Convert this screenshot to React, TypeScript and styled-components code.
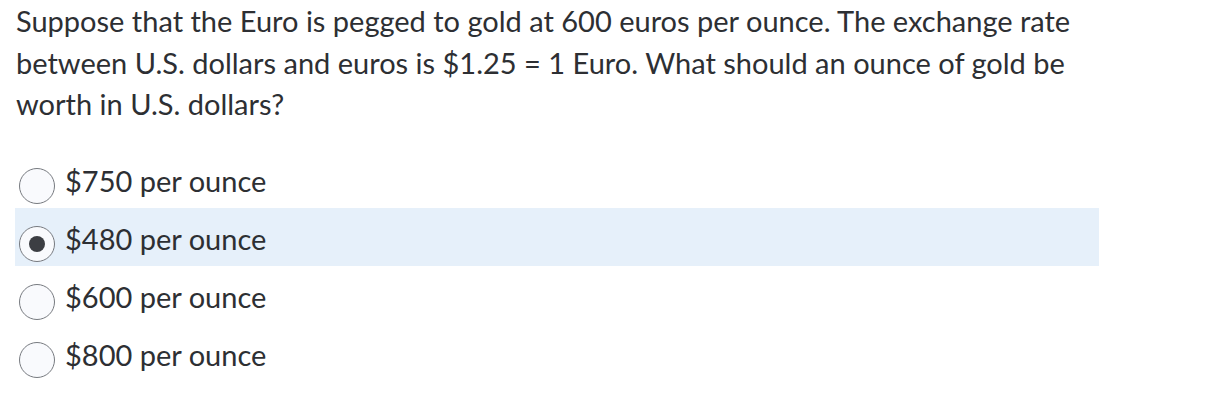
import styled, { createGlobalStyle } from 'styled-components';

const GlobalStyle = createGlobalStyle`
	body {
		margin: 0;
		background: #ffffff;
		font-family: Lato, "Open Sans", sans-serif;
		color: #2d2f33;
	}
`;

const answers = ['$750 per ounce', '$480 per ounce', '$600 per ounce', '$800 per ounce'];
const selected = 1;

function App() {
	return (
		<>
			<GlobalStyle />
			<QuestionContainer>
				<QuestionText>
					Suppose that the Euro is pegged to gold at 600 euros per ounce. The exchange rate between U.S. dollars and euros is $1.25 = 1 Euro. What should an ounce of gold be worth in U.S. dollars?
				</QuestionText>
				<AnswerList>
					{answers.map((answer, i) => (
						<AnswerRow key={answer} $active={i === selected}>
							<Radio $checked={i === selected} />
							<AnswerLabel>{answer}</AnswerLabel>
						</AnswerRow>
					))}
				</AnswerList>
			</QuestionContainer>
		</>
	);
}

const QuestionContainer = styled.div`
	display: flex;
	flex-direction: column;
	gap: 25.5px;
	width: 1084px;
	padding-left: 15px;
`;

const QuestionText = styled.p`
	margin: 0 0 0 1px;

	font-size: 29px;
	line-height: 41.5px;
`;

const AnswerList = styled.div`
	display: flex;
	flex-direction: column;
`;

const AnswerRow = styled.div<{ $active: boolean }>`
	display: flex;
	align-items: center;
	gap: 10px;
	height: 58px;
	padding-left: 4px;

	background: ${({ $active }) => ($active ? '#e6f0fa' : 'transparent')};
`;

const Radio = styled.span<{ $checked: boolean }>`
	display: flex;
	align-items: center;
	justify-content: center;
	box-sizing: border-box;
	width: 36px;
	height: 36px;
	margin-top: 14px;
	border: 1.3px solid #777a80;
	border-radius: 50%;

	background: #f9fafd;

	&::after {
		content: '';
		display: ${({ $checked }) => ($checked ? 'block' : 'none')};
		width: 16px;
		height: 16px;
		border-radius: 50%;
		background: #3c3e43;
	}
`;

const AnswerLabel = styled.span`
	padding-top: 2px;

	font-size: 29px;
`;

export default App;
